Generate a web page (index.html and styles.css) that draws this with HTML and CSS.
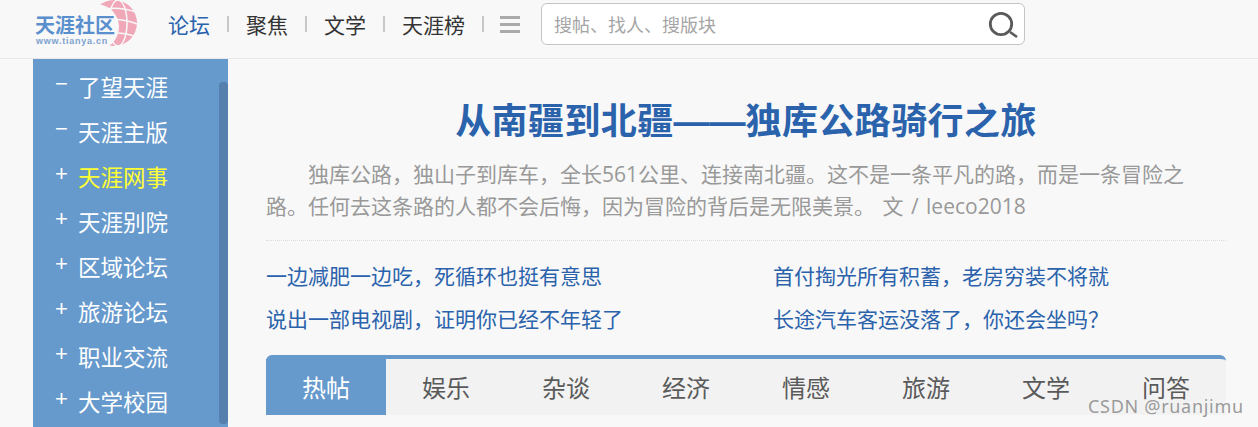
FILE: index.html
```html
<!DOCTYPE html>
<html lang="zh-CN">
<head>
    <meta charset="UTF-8">
    <meta name="viewport" content="width=device-width, initial-scale=1.0">
    <title>天涯社区</title>
    <link rel="stylesheet" href="styles.css">
</head>
<body>

<header class="topbar">
    <div class="logo">
        <svg class="logo-globe" width="50" height="48" viewBox="0 0 50 48">
            <circle cx="26" cy="23" r="23" fill="#f0a8b8"/>
            <g fill="none" stroke="#f8f8f8" stroke-width="1.5">
                <ellipse cx="30" cy="23" rx="9" ry="23"/>
                <path d="M6 11 Q28 5 48 12"/>
                <path d="M8 22 Q30 16 49 24"/>
                <path d="M12 36 Q30 30 46 36"/>
            </g>
            <circle cx="8" cy="27" r="23" fill="#f8f8f8"/>
        </svg>
        <div class="logo-name">天涯社区</div>
        <div class="logo-url">www.tianya.cn</div>
    </div>
    <nav class="topnav">
        <a class="active" href="#">论坛</a>
        <span class="sep"></span>
        <a href="#">聚焦</a>
        <span class="sep"></span>
        <a href="#">文学</a>
        <span class="sep"></span>
        <a href="#">天涯榜</a>
        <span class="sep"></span>
        <span class="menu-icon"><i></i><i></i><i></i></span>
    </nav>
    <div class="search">
        <span class="search-hint">搜帖、找人、搜版块</span>
        <svg width="30" height="30" viewBox="0 0 30 30">
            <circle cx="13" cy="15" r="10.7" fill="none" stroke="#5a5a5a" stroke-width="2.8"/>
            <path d="M22 23 L29 28" stroke="#5a5a5a" stroke-width="2.6"/>
        </svg>
    </div>
</header>

<div class="page">
    <aside class="sidebar">
        <ul>
            <li><span class="mark">−</span>了望天涯</li>
            <li><span class="mark">−</span>天涯主版</li>
            <li class="current"><span class="mark">+</span>天涯网事</li>
            <li><span class="mark">+</span>天涯别院</li>
            <li><span class="mark">+</span>区域论坛</li>
            <li><span class="mark">+</span>旅游论坛</li>
            <li><span class="mark">+</span>职业交流</li>
            <li><span class="mark">+</span>大学校园</li>
        </ul>
        <div class="scrollbar"></div>
    </aside>

    <main class="content">
        <h1>从南疆到北疆<span class="dash">——</span>独库公路骑行之旅</h1>
        <p class="intro">独库公路，独山子到库车，全长561公里、连接南北疆。这不是一条平凡的路，而是一条冒险之路。任何去这条路的人都不会后悔，因为冒险的背后是无限美景。 文 / leeco2018</p>
        <div class="links">
            <a href="#">一边减肥一边吃，死循环也挺有意思</a>
            <a href="#">首付掏光所有积蓄，老房穷装不将就</a>
            <a href="#">说出一部电视剧，证明你已经不年轻了</a>
            <a href="#">长途汽车客运没落了，你还会坐吗？</a>
        </div>
        <div class="tabs">
            <a class="on" href="#">热帖</a>
            <a href="#">娱乐</a>
            <a href="#">杂谈</a>
            <a href="#">经济</a>
            <a href="#">情感</a>
            <a href="#">旅游</a>
            <a href="#">文学</a>
            <a href="#">问答</a>
        </div>
    </main>
</div>

<div class="watermark">CSDN @ruanjimu</div>

</body>
</html>
```

FILE: styles.css
```css
html, body {
    height: 100%;
}

body {
    font-family: "Noto Sans CJK SC", "Noto Sans", sans-serif;
    margin: 0;
    padding: 0;
    background-color: #f8f8f8;
    overflow: hidden;
}

a {
    text-decoration: none;
}

.topbar {
    display: flex;
    align-items: center;
    height: 58px;
    padding-left: 35px;
    border-bottom: 1px solid #e8e8e8;
}

.logo {
    position: relative;
    width: 103px;
    height: 58px;
    flex-shrink: 0;
}

.logo-globe {
    position: absolute;
    left: 53px;
    top: 0;
}

.logo-name {
    position: absolute;
    left: 0;
    top: 14px;
    font-size: 20px;
    line-height: 22px;
    font-weight: 700;
    color: #5a8fce;
    white-space: nowrap;
}

.logo-url {
    position: absolute;
    left: 1px;
    top: 36px;
    font-family: "Liberation Sans", sans-serif;
    font-size: 9px;
    line-height: 11px;
    font-weight: 700;
    letter-spacing: 0.75px;
    color: #7da2cf;
    white-space: nowrap;
}

.topnav {
    display: flex;
    align-items: center;
    margin: 0 0 10px 30px;
    font-size: 21px;
}

.topnav a {
    color: #333;
}

.topnav a.active {
    color: #2a62ac;
}

.sep {
    width: 2px;
    height: 16px;
    margin: 0 17px;
    background-color: #c8c8c8;
}

.menu-icon {
    display: flex;
    flex-direction: column;
    gap: 4px;
    margin-left: -1px;
}

.menu-icon i {
    display: block;
    width: 20px;
    height: 3px;
    background-color: #aaa;
}

.search {
    display: flex;
    align-items: center;
    justify-content: space-between;
    box-sizing: border-box;
    width: 484px;
    height: 42px;
    margin: 0 0 10px 21px;
    padding: 0 6px 0 12px;
    background-color: #fff;
    border: 1px solid #c4c4c4;
    border-radius: 6px;
}

.search-hint {
    font-size: 18px;
    color: #a5a5a5;
}

.page {
    display: flex;
    height: calc(100% - 59px);
    padding-left: 33px;
}

.sidebar {
    position: relative;
    width: 195px;
    flex-shrink: 0;
    background-color: #6699cc;
}

.sidebar ul {
    list-style: none;
    margin: 0;
    padding: 5px 0 0 22px;
}

.sidebar li {
    display: flex;
    height: 45px;
    line-height: 45px;
    font-size: 22.5px;
    color: #fff;
    white-space: nowrap;
}

.sidebar li.current {
    color: #ffff33;
}

.mark {
    width: 23px;
    font-family: "Liberation Sans", sans-serif;
    font-size: 22px;
    line-height: 40px;
    color: #fff;
}

.scrollbar {
    position: absolute;
    right: 0;
    top: 23px;
    width: 9px;
    height: 342px;
    border-radius: 4px;
    background-color: #5580ae;
}

.content {
    width: 960px;
    margin-left: 38px;
}

h1 {
    margin: 32px 0 9px;
    font-size: 36px;
    line-height: 54px;
    font-weight: 700;
    letter-spacing: 0.4px;
    text-align: center;
    color: #2a62ac;
}

.dash {
    font-family: "Liberation Sans", sans-serif;
    letter-spacing: 0;
}

.intro {
    margin: 0;
    padding: 0 30px 18px 0;
    border-bottom: 1px dotted #dcdcdc;
    font-family: "Open Sans", "Noto Sans CJK SC", sans-serif;
    font-size: 21px;
    line-height: 32px;
    word-spacing: 2px;
    text-indent: 2em;
    color: #999;
}

.links {
    display: grid;
    grid-template-columns: 507px 1fr;
    grid-auto-rows: 43px;
    margin-top: 13px;
    font-size: 21px;
    line-height: 43px;
}

.links a {
    color: #2a62ac;
}

.tabs {
    display: flex;
    height: 56px;
    margin-top: 15px;
    border-top: 4px solid #6699cc;
    border-radius: 6px 6px 0 0;
    background-color: #f2f2f2;
}

.tabs a {
    width: 120.3px;
    font-size: 24px;
    line-height: 56px;
    text-align: center;
    color: #5a5a5a;
}

.tabs a.on {
    background-color: #6699cc;
    color: #fff;
}

.watermark {
    position: absolute;
    left: 1088px;
    top: 394px;
    font-family: "Noto Sans", sans-serif;
    font-size: 18px;
    line-height: 24px;
    letter-spacing: 0.7px;
    color: rgba(130, 130, 130, 0.8);
}
```
